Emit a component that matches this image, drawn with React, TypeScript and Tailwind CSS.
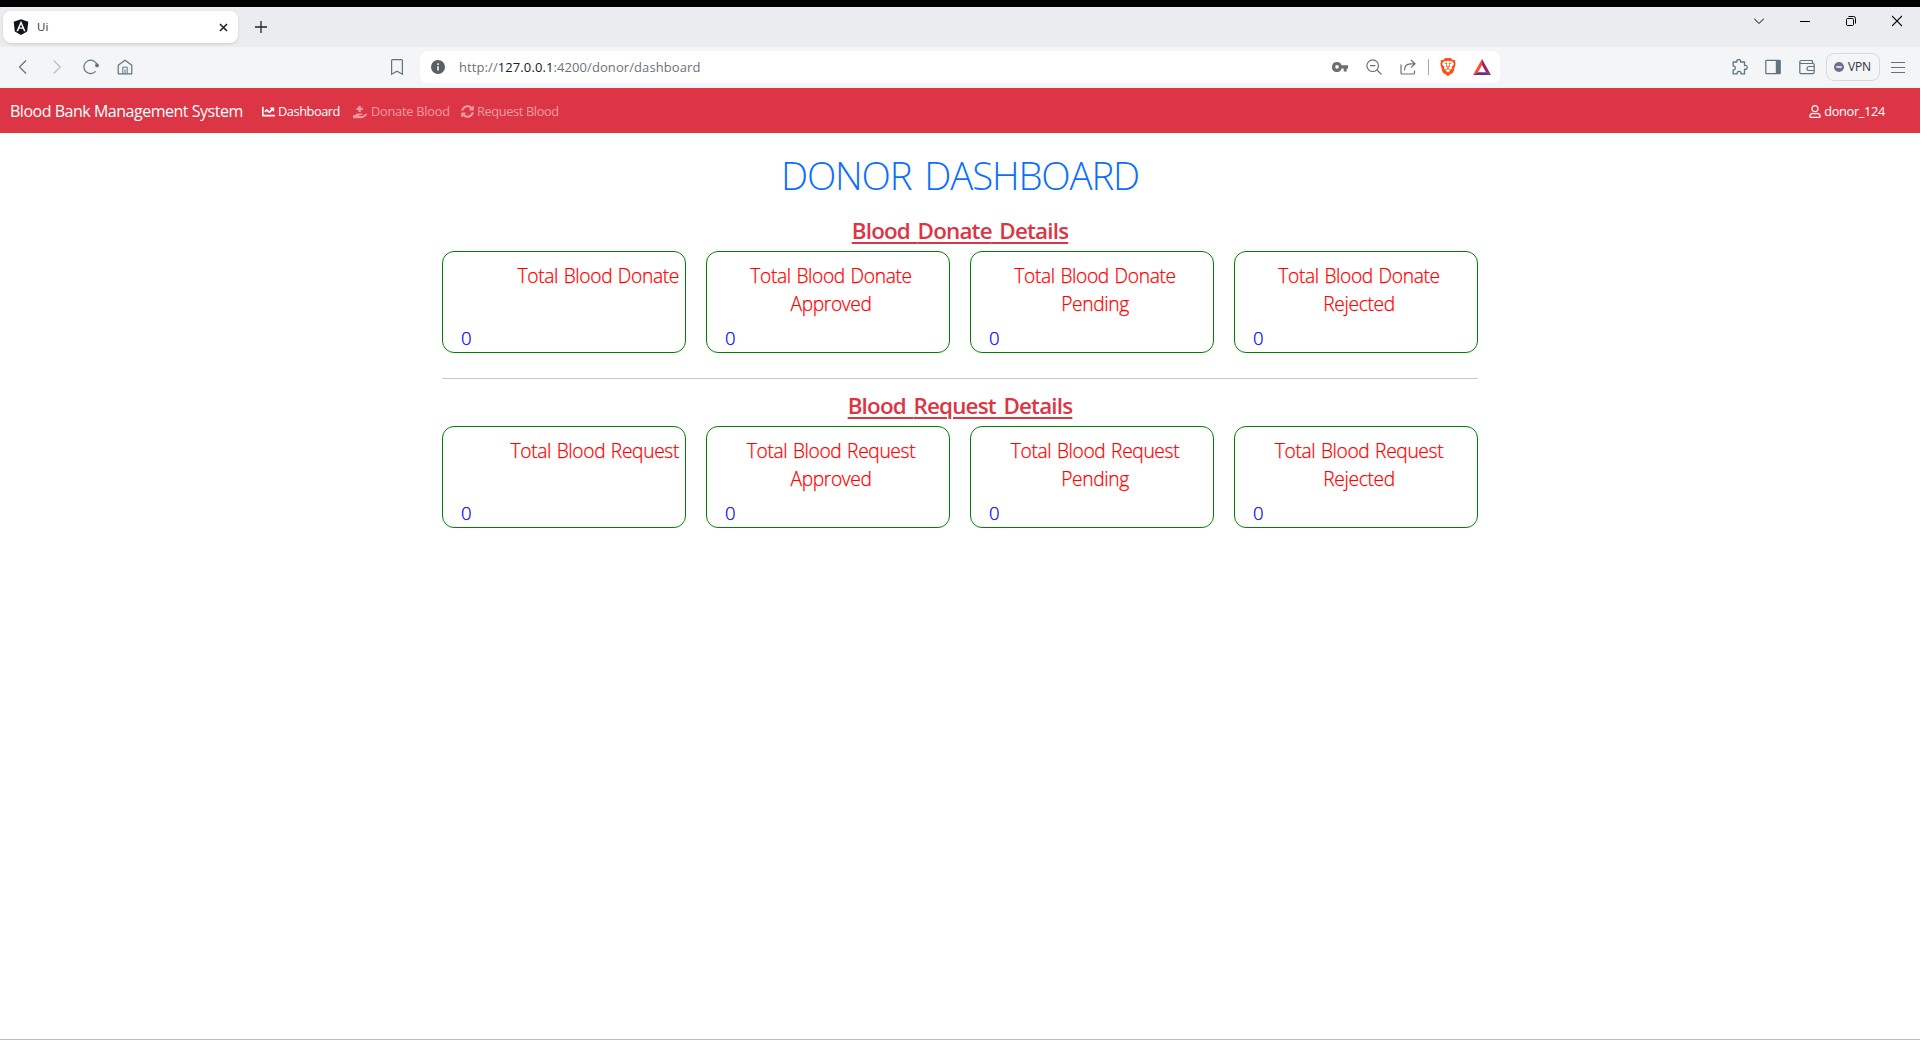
import React from "react";
import { FaAngular, FaChartLine, FaHandHoldingMedical, FaSyncAlt, FaRegUser } from "react-icons/fa";
import { SiBrave } from "react-icons/si";

type IconProps = { className: string; children: React.ReactNode; box?: string };

function Line({ className, children, box = "0 0 16 16" }: IconProps) {
  return (
    <svg viewBox={box} className={className} fill="none" stroke="currentColor" strokeWidth="1.2">
      {children}
    </svg>
  );
}

function TabStrip() {
  return (
    <div className="flex h-10 bg-[#ebecf0] text-[#1f2328]">
      <div className="mt-1 ml-[3px] flex h-8 w-[235px] items-center rounded-lg bg-white shadow-sm">
        <FaAngular className="ml-[9px] h-[18px] w-[18px] text-[#10131a]" />
        <span className="ml-[7px] text-[11.5px] text-[#333]">Ui</span>
        <Line className="mr-[10px] ml-auto h-[9px] w-[9px]" box="0 0 9 9">
          <path d="M1 1l7 7M8 1L1 8" strokeWidth="1.6" />
        </Line>
      </div>
      <Line className="mt-[14px] ml-[17px] h-3 w-3" box="0 0 12 12">
        <path d="M6 0v12M0 6h12" strokeWidth="1.3" />
      </Line>
      <div className="mt-[8px] mr-[18px] ml-auto flex h-3 gap-[36px] text-black">
        <Line className="h-3 w-[10px]" box="0 0 10 12">
          <path d="M0 3.500l5 5 5-5" strokeWidth="1" />
        </Line>
        <Line className="h-3 w-[10px]" box="0 0 10 12">
          <path d="M0 6.500h10" strokeWidth="1" />
        </Line>
        <Line className="h-3 w-[10px]" box="0 0 10 12">
          <rect x=".5" y="3.500" width="7" height="7" rx="1.200" strokeWidth="1" />
          <path d="M2.500 1.500h5a2 2 0 0 1 2 2v5" strokeWidth="1" />
        </Line>
        <Line className="h-3 w-[10px]" box="0 0 10 12">
          <path d="M0 1l10 10M10 1L0 11" strokeWidth="1.100" />
        </Line>
      </div>
    </div>
  );
}

function AddressBar() {
  return (
    <div className="flex h-[41px] items-center bg-[#f3f5f7] pb-px text-[#5e747f]">
      <Line className="ml-[15px] h-4 w-4">
        <path d="M11 1.500L4.500 8l6.500 6.500" />
      </Line>
      <Line className="ml-[18px] h-4 w-4 text-[#b5c0c6]">
        <path d="M4.700 1.500L11.200 8 4.700 14.500" />
      </Line>
      <Line className="ml-[18px] h-4 w-4">
        <path d="M12.600 12.400a6.700 6.700 0 1 1 1.600-5.800" />
        <circle cx="14" cy="6.400" r="1.900" fill="currentColor" stroke="none" />
      </Line>
      <Line className="ml-[18px] h-4 w-4">
        <path d="M1.200 6.300L8 1.200l6.800 5.100v8.500H1.200z" strokeLinejoin="round" />
        <path d="M5.800 14.500V8.200h4.400v6.300M8 10.500v4" strokeWidth="1" />
      </Line>
      <Line className="ml-[256px] h-4 w-4">
        <path d="M2.600 1.600q0-.9.900-.9h9q.9 0 .9.900v13.600L8 12.300l-5.400 2.900z" />
      </Line>
      <div className="ml-[15px] flex h-8 w-[1080px] items-center rounded-lg bg-white text-[#6f6f6f]">
        <svg viewBox="0 0 14 14" className="ml-[11px] h-[14px] w-[14px]">
          <circle cx="7" cy="7" r="7" fill="#5a5e66" />
          <path d="M7 6.200v4.300M7 3.300v1.600" stroke="#fff" strokeWidth="1.500" />
        </svg>
        <span className="ml-[14px] pt-px text-[13px] tracking-[0.09px] whitespace-nowrap text-[#6d7278]">
          http://<span className="text-[#202124]">127.0.0.1</span>:4200/donor/dashboard
        </span>
        <svg viewBox="0 0 16 10" className="ml-auto h-[10px] w-4" fill="currentColor">
          <path fillRule="evenodd" d="M5 0a5 5 0 0 1 4.600 3.200H16v3.400h-1.300V9.400h-3V6.600H9.700A5 5 0 1 1 5 0zm0 3.100a1.800 1.800 0 1 0 0 3.600 1.800 1.800 0 0 0 0-3.600z" />
        </svg>
        <Line className="ml-[18px] h-4 w-4">
          <circle cx="6.700" cy="6.700" r="5.800" />
          <path d="M11 11l4.500 4.500M4 6.700h5.400" />
        </Line>
        <Line className="ml-[18px] h-4 w-4">
          <path d="M1 5.500V14q0 1 1 1h11.500q1 0 1-1v-2.500M4.500 11.500q0-6.700 6-6.700H15M11 1l4 3.800-4 3.800" />
        </Line>
        <div className="ml-3 h-4 w-px bg-[#aaa]" />
        <SiBrave className="ml-[10px] h-[18px] w-[18px] text-[#fb5316]" />
        <svg viewBox="0 0 18 16" className="mr-[9px] ml-4 h-4 w-[18px]">
          <path d="M9 0L0 16l5-2.800L9 6z" fill="#ff4d2b" />
          <path d="M9 0l9 16-5-2.800L9 6z" fill="#9e1f63" />
          <path d="M0 16l5-2.800h8L18 16z" fill="#662d91" />
        </svg>
      </div>
      <svg viewBox="0 0 16 16" className="ml-auto h-4 w-4" fill="none" stroke="currentColor" strokeWidth="1.300" strokeLinejoin="round">
        <path d="M1.200 3h3.600c-.4-1.600.6-2.400 1.900-2.400S9 1.400 8.600 3h3.900v3.500c1.500-.4 2.700.3 2.700 1.900s-1.200 2.300-2.700 1.800v4.700H9c.3-1.500-.5-2.500-1.900-2.500s-2.300 1-1.900 2.500h-4v-3.900c1.200.2 2.100-.7 2.100-2S2.400 7 1.200 7.200z" />
      </svg>
      <Line className="ml-[17px] h-4 w-4">
        <rect x=".8" y="1.300" width="14.400" height="13.400" rx=".8" />
        <path d="M10.800 1h4.400v14h-4.400z" fill="currentColor" stroke="none" />
      </Line>
      <Line className="ml-[18px] h-4 w-4">
        <path d="M13.500 4V2.500q0-1-1-1H2.300a1.500 1.500 0 0 0 0 3H14q1.200 0 1.200 1.200v7.600q0 1.400-1.400 1.400H2.200Q.8 14.700.8 13.300V3" />
        <path d="M15 7.500H10a1.800 1.800 0 0 0 0 4h5" />
      </Line>
      <div className="ml-[11px] flex h-7 w-[54px] items-center rounded-lg border border-[#d3dbe1] text-[#30343a]">
        <svg viewBox="0 0 10 10" className="ml-[7px] h-[10px] w-[10px]">
          <circle cx="5" cy="5" r="5" fill="#6b7094" />
          <path d="M2.300 5h5.400" stroke="#fff" strokeWidth="1.500" />
        </svg>
        <span className="ml-1 text-[12px] tracking-[-0.2px]">VPN</span>
      </div>
      <Line className="mr-[15px] ml-[11px] h-3 w-[14px]" box="0 0 14 12">
        <path d="M0 1.500h14M0 6.500h14M0 11.500h14" strokeWidth="1.100" />
      </Line>
    </div>
  );
}

function NavBar() {
  return (
    <nav className="flex h-[45px] items-center bg-[#dc3545] pt-[2px] text-[12.8px] whitespace-nowrap text-white">
      <span className="ml-[10px] w-[252px] pb-[2px] text-[16px] tracking-[-0.48px]">Blood Bank Management System</span>
      <span className="flex w-[91px] items-center gap-[3px] tracking-[-0.45px]">
        <FaChartLine className="h-[13px] w-[13px]" />
        Dashboard
      </span>
      <span className="flex w-[108px] items-center gap-[4px] tracking-[-0.25px] text-white/50">
        <FaHandHoldingMedical className="h-[14px] w-[14px]" />
        Donate Blood
      </span>
      <span className="flex items-center gap-[3px] tracking-[-0.38px] text-white/50">
        <FaSyncAlt className="h-[13px] w-[13px]" />
        Request Blood
      </span>
      <span className="mr-[35px] ml-auto flex items-center gap-[3px] tracking-[-0.35px]">
        <FaRegUser className="h-[13px] w-[12px]" />
        donor_124
      </span>
    </nav>
  );
}

const states = ["", "Approved", "Pending", "Rejected"];

function Section({ kind }: { kind: string }) {
  return (
    <section>
      <h2 className="h-[35px] text-center text-[22.4px] leading-[30px] font-semibold tracking-[-0.8px] text-[#dc3545] [word-spacing:2.5px]">
        <span className="underline decoration-2 underline-offset-[3px]">Blood {kind} Details</span>
      </h2>
      <div className="grid grid-cols-4 gap-5 text-[19.2px] leading-7 font-light [-webkit-text-stroke:0.25px]">
        {states.map((state) => (
          <div key={state} className="flex h-[102px] flex-col justify-between rounded-xl border border-[#008000] pt-[10px] pr-[6px] pl-[18px]">
            <p className={state ? "pr-[6px] text-center tracking-[-0.35px] text-[#ff0000] [word-spacing:1px]" : "text-right tracking-[-0.35px] text-[#ff0000] [word-spacing:1px]"}>
              Total Blood {kind}
              <br />
              {state}
            </p>
            <p className="text-[18.5px] text-[#0000ff]">0</p>
          </div>
        ))}
      </div>
    </section>
  );
}

export default function App() {
  return (
    <div className="h-[1040px] w-[1921px] overflow-hidden bg-white pr-px font-['Open_Sans','Noto_Sans',sans-serif]">
      <div className="flex h-full flex-col border-t-[7px] border-black">
        <TabStrip />
        <AddressBar />
        <NavBar />
        <main className="mx-auto w-[1036px] flex-1">
          <h1 className="pt-[20px] text-center text-[38.4px] leading-[45px] font-light tracking-[-1.15px] text-[#0d6efd] [word-spacing:4px]">
            DONOR DASHBOARD
          </h1>
          <div className="h-[18px]" />
          <Section kind="Donate" />
          <hr className="mt-[25px] mb-[12px] border-[#c8c8c8]" />
          <Section kind="Request" />
        </main>
        <div className="h-px bg-[#bdbdbd]" />
      </div>
    </div>
  );
}
